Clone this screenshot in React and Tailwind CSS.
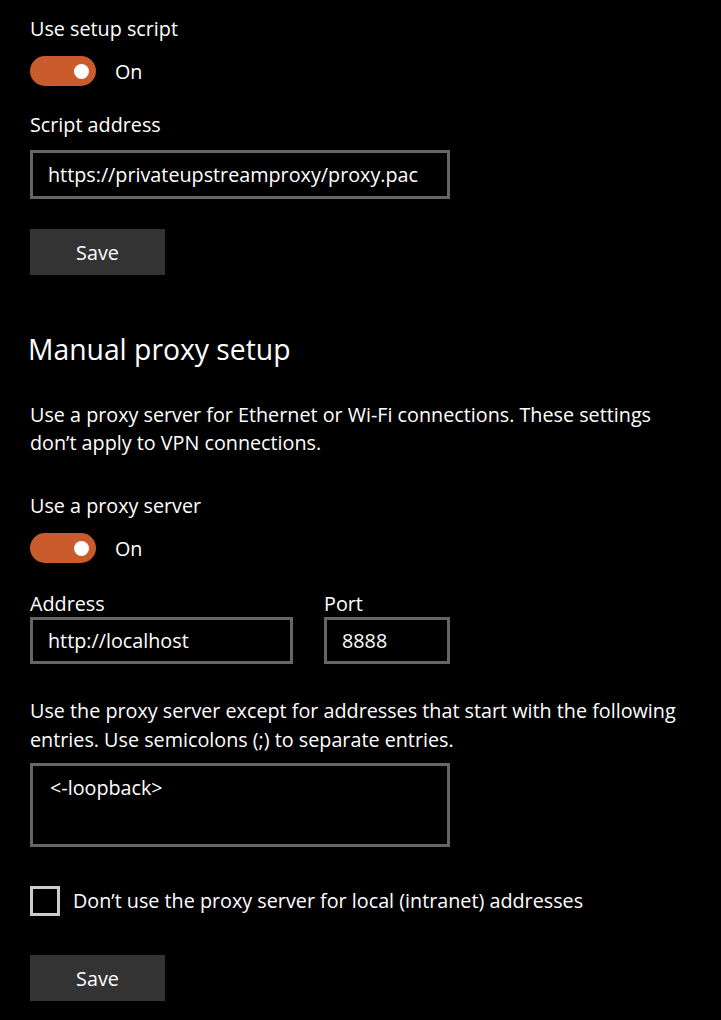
import { useState } from 'react';

function Toggle({ on, onChange }) {
  return (
    <div className="mt-[13px] flex h-[30px] items-center gap-[19px]">
      <button
        type="button"
        onClick={() => onChange(!on)}
        className={`relative h-[30px] w-[66px] rounded-full ${on ? 'bg-[#ca5b2c]' : 'border-[3px] border-white bg-transparent'}`}
      >
        <span
          className={`absolute top-[8px] h-[15px] w-[15px] rounded-full bg-white ${on ? 'left-[44px]' : 'left-[7px]'}`}
        />
      </button>
      <span className="pt-[2px] text-[19.75px] leading-[28px]">{on ? 'On' : 'Off'}</span>
    </div>
  );
}

function Field({ value, className = '' }) {
  return (
    <div className={`flex items-center border-[3px] border-[#666666] px-[15px] text-[19.75px] ${className}`}>
      {value}
    </div>
  );
}

function SaveButton({ className = '' }) {
  return (
    <button type="button" className={`h-[46px] w-[135px] bg-[#333333] pt-[2px] text-[19.75px] text-white ${className}`}>
      Save
    </button>
  );
}

export default function App() {
  const [script, setScript] = useState(true);
  const [proxy, setProxy] = useState(true);
  const [local, setLocal] = useState(false);

  return (
    <div className="min-h-[1020px] w-[721px] overflow-hidden bg-black pl-[30px] pt-[15px] font-['Open_Sans',sans-serif] text-white">
      {/* Automatic proxy setup */}
      <p className="text-[19.75px] leading-[28px]">Use setup script</p>
      <Toggle on={script} onChange={setScript} />

      <p className="mt-[25px] text-[19.75px] leading-[28px]">Script address</p>
      <Field value="https://privateupstreamproxy/proxy.pac" className="mt-[11px] h-[49px] w-[420px]" />
      <SaveButton className="mt-[30px] block" />

      {/* Manual proxy setup */}
      <h2 className="-ml-[2px] mt-[54px] text-[28.3px] font-normal leading-[40px]">Manual proxy setup</h2>

      <p className="mt-[32px] w-[660px] text-[19.75px] leading-[28px]">
        Use a proxy server for Ethernet or Wi-Fi connections. These settings don’t apply to VPN connections.
      </p>

      <p className="mt-[35px] text-[19.75px] leading-[28px]">Use a proxy server</p>
      <Toggle on={proxy} onChange={setProxy} />

      <div className="mt-[29px] flex gap-[31px]">
        <div>
          <p className="text-[19.75px] leading-[24px]">Address</p>
          <Field value="http://localhost" className="mt-[1px] h-[47px] w-[263px]" />
        </div>
        <div>
          <p className="text-[19.75px] leading-[24px]">Port</p>
          <Field value="8888" className="mt-[1px] h-[47px] w-[126px]" />
        </div>
      </div>

      <p className="mt-[32px] w-[670px] text-[19.75px] leading-[29px]">
        Use the proxy server except for addresses that start with the following entries. Use semicolons (;) to separate entries.
      </p>
      <div className="mt-[9px] h-[84px] w-[420px] border-[3px] border-[#666666] px-[17px] pt-[8px] text-[19.75px] leading-[28px]">
        &lt;-loopback&gt;
      </div>

      <label className="mt-[39px] flex h-[30px] cursor-pointer items-center gap-[13px]">
        <span
          onClick={() => setLocal(!local)}
          className={`h-[30px] w-[30px] border-[3px] ${local ? 'border-[#ca5b2c] bg-[#ca5b2c]' : 'border-[#cccccc]'}`}
        />
        <span className="text-[19.75px] leading-[28px]">Don’t use the proxy server for local (intranet) addresses</span>
      </label>

      <SaveButton className="mt-[39px] block" />
    </div>
  );
}
